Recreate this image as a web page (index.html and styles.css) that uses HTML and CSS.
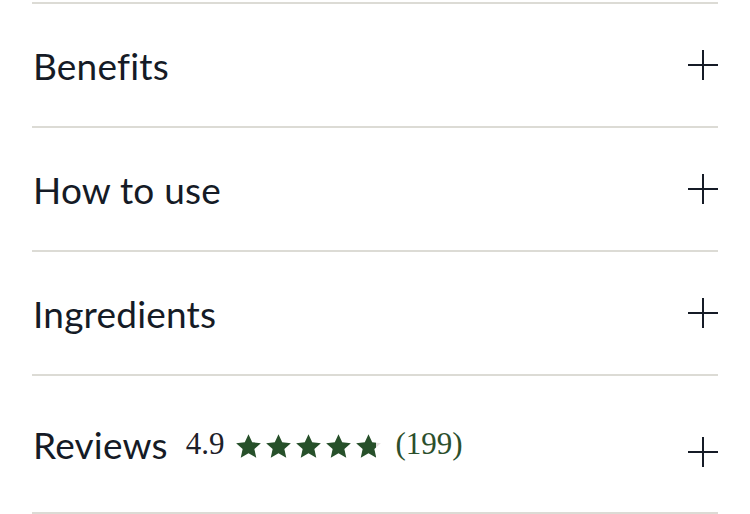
FILE: index.html
```html
<!DOCTYPE html>
<html lang="en">
<head>
  <meta charset="UTF-8" />
  <meta name="viewport" content="width=device-width, initial-scale=1" />
  <title>Product details</title>
  <link rel="stylesheet" href="styles.css">
</head>
<body>

  <!-- Accordion list -->
  <div class="accordion">
    <div class="item">
      <span class="title">Benefits</span>
      <span class="plus"></span>
    </div>
    <div class="item">
      <span class="title">How to use</span>
      <span class="plus"></span>
    </div>
    <div class="item">
      <span class="title">Ingredients</span>
      <span class="plus"></span>
    </div>
    <div class="item reviews">
      <div class="review-head">
        <span class="title">Reviews</span>
        <span class="score">4.9</span>
        <span class="stars">
          <svg class="star" viewBox="0 0 24 24"><path d="M12 1l3.3 7.2 7.7.8-5.8 5.2 1.7 7.8L12 18l-6.9 4 1.7-7.8L1 9l7.7-.8z"/></svg>
          <svg class="star" viewBox="0 0 24 24"><path d="M12 1l3.3 7.2 7.7.8-5.8 5.2 1.7 7.8L12 18l-6.9 4 1.7-7.8L1 9l7.7-.8z"/></svg>
          <svg class="star" viewBox="0 0 24 24"><path d="M12 1l3.3 7.2 7.7.8-5.8 5.2 1.7 7.8L12 18l-6.9 4 1.7-7.8L1 9l7.7-.8z"/></svg>
          <svg class="star" viewBox="0 0 24 24"><path d="M12 1l3.3 7.2 7.7.8-5.8 5.2 1.7 7.8L12 18l-6.9 4 1.7-7.8L1 9l7.7-.8z"/></svg>
          <svg class="star" viewBox="0 0 24 24">
            <defs>
              <linearGradient id="part">
                <stop offset="80%" stop-color="#27502a"/>
                <stop offset="80%" stop-color="#e4dfdf"/>
              </linearGradient>
            </defs>
            <path fill="url(#part)" d="M12 1l3.3 7.2 7.7.8-5.8 5.2 1.7 7.8L12 18l-6.9 4 1.7-7.8L1 9l7.7-.8z"/>
          </svg>
        </span>
        <span class="count">(199)</span>
      </div>
      <span class="plus"></span>
    </div>
  </div>

</body>
</html>
```

FILE: styles.css
```css
body {
  margin: 0;
  padding-top: 2px;
  background: #fff;
  color: #151b26;
  font-family: Lato, "Open Sans", sans-serif;
}
.accordion {
  margin: 0 32px;
}
.item {
  display: flex;
  align-items: center;
  justify-content: space-between;
  height: 122px;
  border-top: 2px solid #dcdbd5;
  padding-left: 1px;
}
.item.reviews {
  height: 136px;
  border-bottom: 2px solid #dcdbd5;
}
.title {
  font-size: 37px;
  letter-spacing: 0.2px;
}
.plus {
  position: relative;
  width: 30px;
  height: 30px;
  flex-shrink: 0;
}
.plus::before,
.plus::after {
  content: "";
  position: absolute;
  background: #151b26;
}
.plus::before {
  left: 0;
  top: 14px;
  width: 30px;
  height: 2px;
}
.plus::after {
  left: 14px;
  top: 0;
  width: 2px;
  height: 30px;
}
.reviews .plus {
  margin-top: 16px;
}
.review-head {
  display: flex;
  align-items: center;
}
.score {
  margin-left: 18px;
  font-family: "Liberation Serif", serif;
  font-size: 31px;
  color: #1d2029;
}
.stars {
  display: flex;
  gap: 3px;
  margin-left: 10px;
  margin-top: 4px;
}
.star {
  width: 27px;
  height: 27px;
  fill: #27502a;
}
.count {
  margin-left: 14px;
  font-family: "Liberation Serif", serif;
  font-size: 31px;
  color: #2c4f2c;
}
```
